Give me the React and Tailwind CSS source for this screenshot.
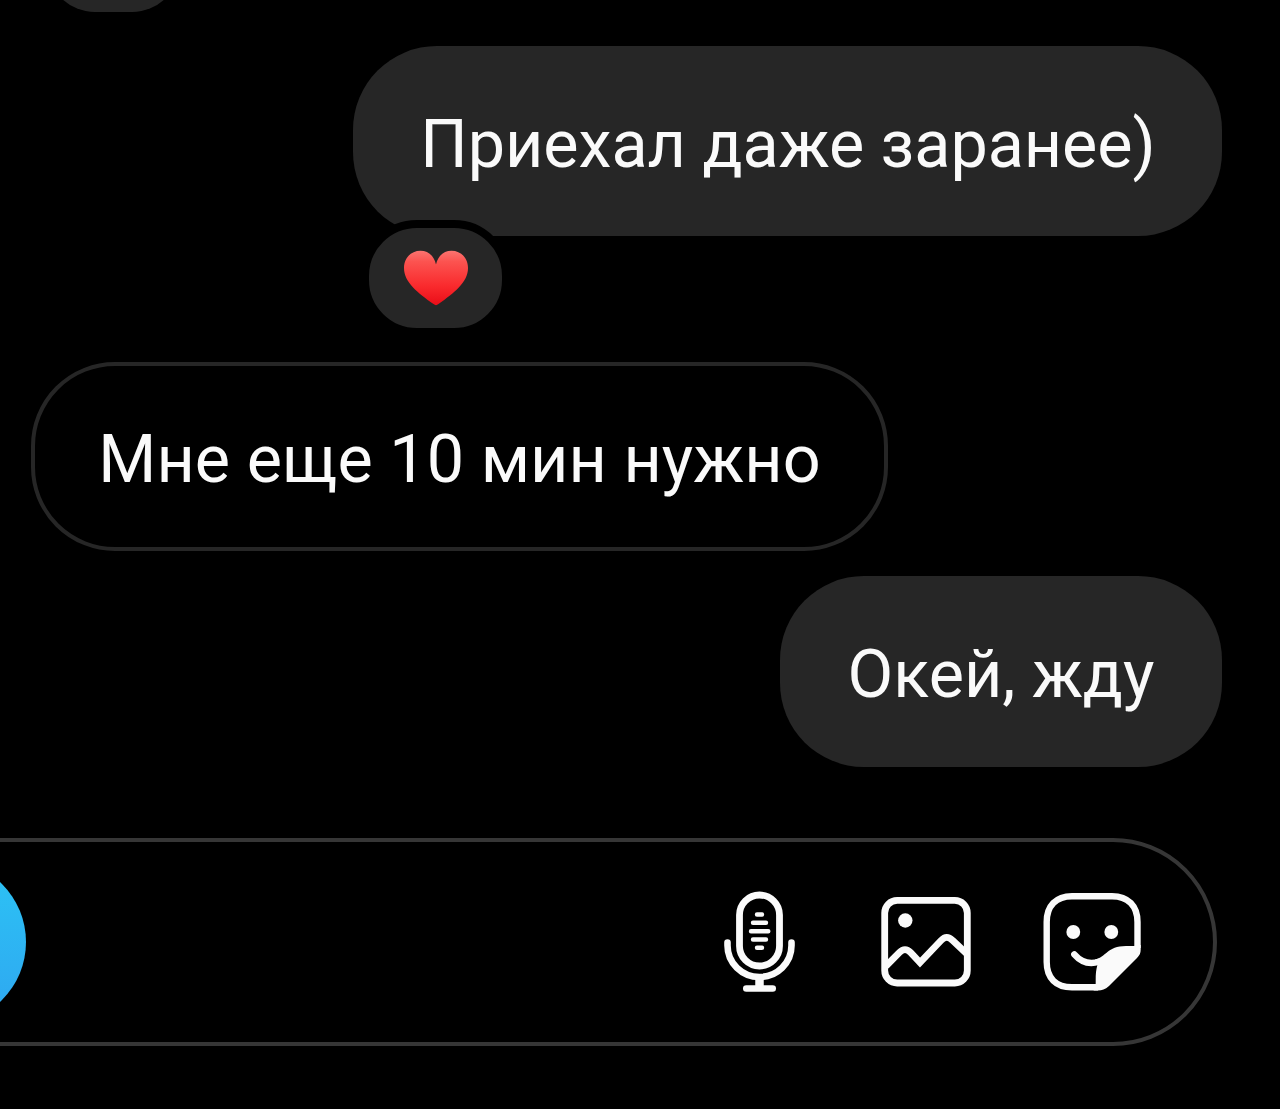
import React from 'react';
import clsx from 'clsx';

const HeartIcon = () => (
    <svg width="66" height="56" viewBox="0 0 66 56" className="block">
        <defs>
            <linearGradient id="heartFill" x1="0" y1="0" x2="0" y2="1">
                <stop offset="0" stopColor="#fb7470" />
                <stop offset="0.2" stopColor="#fc5350" />
                <stop offset="0.65" stopColor="#f92a2d" />
                <stop offset="1" stopColor="#ea0d18" />
            </linearGradient>
        </defs>
        <path
            d="M33 14.500C31 5.500 25 0.700 17.500 0.700C8 0.700 1 8 1 18C1 32.500 15 43 30.500 54C32.500 55.500 33.500 55.500 35.500 54C51 43 65 32.500 65 18C65 8 58 0.700 48.500 0.700C41 0.700 35 5.500 33 14.500Z"
            fill="url(#heartFill)"
        />
    </svg>
);

const MicIcon = () => (
    <svg width="72" height="102" viewBox="0 0 72 102" fill="none" stroke="#fafafa" strokeLinecap="round">
        <rect x="15.500" y="4" width="40" height="71" rx="20" strokeWidth="6.800" />
        <path d="M3.500 51.500V54.500C3.500 72 18 86 35.500 86S67.500 72 67.500 54.500V51.500" strokeWidth="6.600" />
        <path d="M35.500 86V97" strokeWidth="8.500" strokeLinecap="butt" />
        <path d="M22.300 97.500H48.700" strokeWidth="6.600" />
        <path d="M33 23.500H38M29 31.700H42M27 40.200H44.300M29 48.500H42M33 56.700H38" strokeWidth="4.400" />
    </svg>
);

const PhotoIcon = () => (
    <svg width="90" height="90" viewBox="0 0 90 90" fill="none" stroke="#fafafa">
        <rect x="3.700" y="3.400" width="82.600" height="82.600" rx="12.500" strokeWidth="6.800" />
        <circle cx="24.300" cy="23.500" r="7.200" fill="#fafafa" stroke="none" />
        <path d="M5 69L18.500 55.300C22 51.600 26 51.600 29.500 55.300L39 65.500L60 43.500C64 39.300 67.500 39.300 71.500 43.300L86 57" strokeWidth="6.800" />
    </svg>
);

const StickerIcon = () => (
    <svg width="98" height="98" viewBox="0 0 98 98" fill="none" stroke="#fafafa">
        <path
            d="M94.500 55V29C94.500 13 85 3.200 69 3.200H29C13 3.200 3.700 13 3.700 29V69C3.700 85 13 94.300 29 94.300H55"
            strokeWidth="6.400"
        />
        <circle cx="30.300" cy="39" r="6.900" fill="#fafafa" stroke="none" />
        <circle cx="68.300" cy="39" r="6.900" fill="#fafafa" stroke="none" />
        <path d="M31.300 61.300C38 69 47 71.500 56 68.700" strokeWidth="6.400" strokeLinecap="round" />
        <path
            d="M97.700 52V56.500C97.700 60 96.500 62.500 94 65L66 93C62 96.500 59 97.500 55 97.500H50.500C53 95 52.700 91 52.700 87C52.700 81 53 77 54.500 71.500L52 66.500C63 64.500 64 53 83 53H90C92 53 93 52.500 93.500 51.500Z"
            fill="#fafafa"
            stroke="none"
        />
    </svg>
);

const Bubble = ({ text, own, className }) => (
    <div
        className={clsx(
            'flex items-center justify-center rounded-[84px] pt-[6px] text-[66.500px] leading-none whitespace-nowrap',
            own ? 'self-end mr-[58px] bg-[#262626]' : 'self-start ml-[31px] border-4 border-[#262626]',
            className
        )}
    >
        {text}
    </div>
);

const App = () => {
    return (
        <main className="flex flex-col w-[1280px] h-[1109px] overflow-hidden bg-black text-[#fafafa] font-['Roboto',sans-serif]">
            {/* Reaction of the message above, scrolled mostly out of view */}
            <div className="w-[133px] h-3 ml-[47px] shrink-0 overflow-hidden flex items-end">
                <div className="w-full h-[100px] shrink-0 rounded-[48px] bg-[#262626]" />
            </div>

            <div className="relative flex flex-col mt-[34px]">
                <Bubble own text="Приехал даже заранее)" className="w-[869px] h-[190px] pl-px tracking-[-0.05px]" />
                <div className="absolute left-[361px] top-[174px] w-[149px] h-[116px] rounded-[56px] border-8 border-black bg-[#262626] flex justify-center pt-[22px]">
                    <HeartIcon />
                </div>
            </div>

            <Bubble text="Мне еще 10 мин нужно" className="w-[857px] h-[189px] mt-[126px] tracking-[0.05px]" />
            <Bubble own text="Окей, жду" className="w-[442px] h-[191px] mt-[25px]" />

            {/* Composer */}
            <div className="flex items-center h-[208px] w-[1377px] -ml-[160px] mt-[71px] shrink-0 rounded-full border-4 border-[#363636] pl-[18px] pr-[72px]">
                <div className="w-[164px] h-[164px] rounded-full bg-linear-to-b from-[#2cc4f5] to-[#2fa6f0]" />
                <div className="flex items-center ml-auto">
                    <MicIcon />
                    <div className="ml-[85px]">
                        <PhotoIcon />
                    </div>
                    <div className="ml-[72px]">
                        <StickerIcon />
                    </div>
                </div>
            </div>
        </main>
    );
};

export default App;
